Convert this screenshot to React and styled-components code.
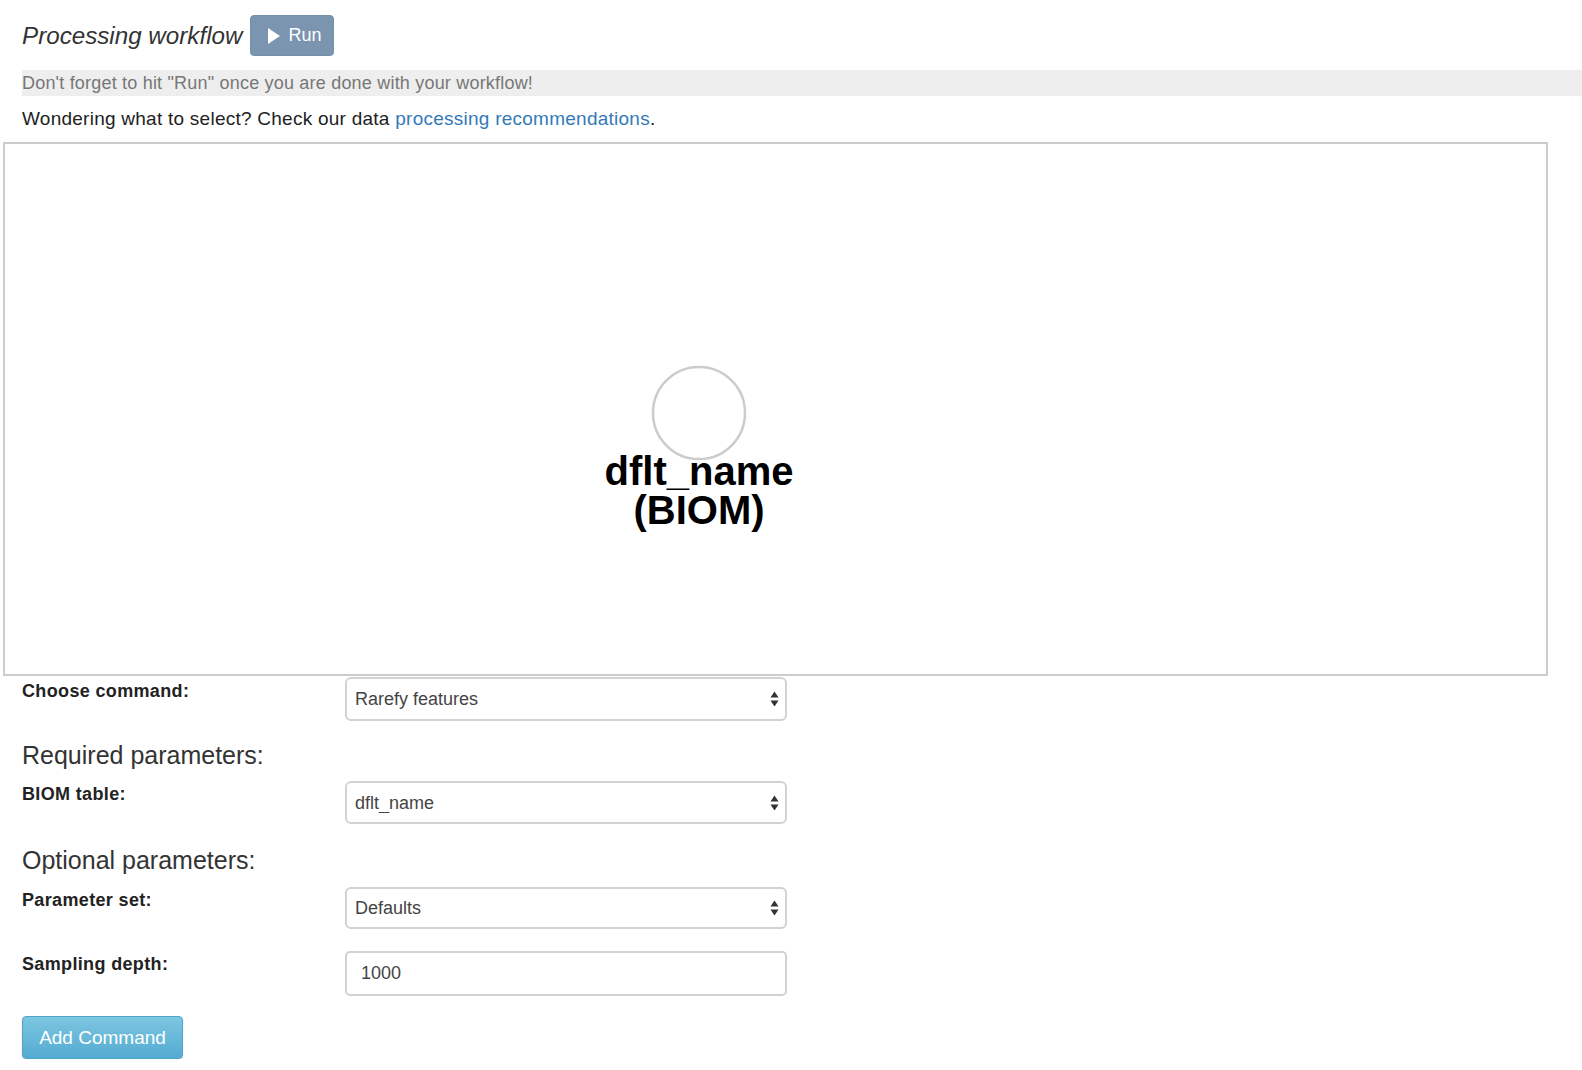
import React from "react";
import styled, { createGlobalStyle } from "styled-components";

const Global = createGlobalStyle`
  html, body { margin: 0; padding: 0; background: #fff; }
  body {
    font-family: "Liberation Sans", Arial, Helvetica, sans-serif;
    color: #333;
  }
  * { box-sizing: border-box; }
`;

const Page = styled.div`
  width: 1582px;
  padding-top: 15px;
`;

const Header = styled.div`
  display: flex;
  align-items: center;
  gap: 8px;
  padding-left: 22px;
  height: 41px;
`;

const Title = styled.h3`
  margin: 0;
  font-size: 24.2px;
  font-weight: 400;
  font-style: italic;
  color: #333;
`;

const RunButton = styled.button`
  display: flex;
  align-items: center;
  gap: 8px;
  height: 41px;
  width: 84px;
  padding: 0 0 0 17px;
  border: 1px solid #7490ab;
  border-radius: 4px;
  background: #7b94af;
  color: #fff;
  font-family: inherit;
  font-size: 18px;
  cursor: default;
`;

const Notice = styled.div`
  margin: 14px 0 0 22px;
  height: 26px;
  line-height: 26px;
  background: #eeeeee;
  color: #777;
  font-size: 18px;
  letter-spacing: 0.2px;
`;

const Hint = styled.p`
  margin: 10px 0 0 22px;
  font-size: 19px;
  letter-spacing: 0.25px;
  line-height: 26px;
  color: #222;
`;

const Link = styled.a`
  color: #337ab7;
  text-decoration: none;
`;

const Canvas = styled.div`
  position: relative;
  margin: 10px 0 0 3px;
  width: 1545px;
  height: 534px;
  border: 2px solid #cccccc;
  background: #fff;
`;

const Graph = styled.svg`
  display: block;
  width: 100%;
  height: 100%;
`;

const Form = styled.div`
  padding-left: 22px;
  display: flex;
  flex-direction: column;
`;

const Row = styled.div`
  display: grid;
  grid-template-columns: 323px 442px;
  align-items: start;
  margin-top: ${(p) => p.$mt || 0}px;
`;

const Label = styled.label`
  font-weight: 700;
  font-size: 18px;
  letter-spacing: 0.35px;
  line-height: 20px;
  color: #222;
  padding-top: ${(p) => p.$pt || 4}px;
`;

const SectionTitle = styled.h4`
  margin: ${(p) => p.$mt}px 0 0 0;
  font-size: 25px;
  font-weight: 400;
  color: #333;
  line-height: 30px;
`;

const SelectWrap = styled.div`
  position: relative;
  width: 442px;
`;

const Select = styled.select`
  appearance: none;
  -webkit-appearance: none;
  width: 100%;
  height: ${(p) => p.$h || 44}px;
  padding: 0 30px 0 8px;
  border: 2px solid #d2d2d2;
  border-radius: 6px;
  background: #fff;
  font-family: inherit;
  font-size: 18px;
  color: #444;
  outline: none;
`;

const Arrows = styled.svg`
  position: absolute;
  right: 8px;
  top: 50%;
  transform: translateY(-50%);
  pointer-events: none;
`;

const Input = styled.input`
  width: 442px;
  height: 45px;
  padding: 0 14px;
  border: 2px solid #d2d2d2;
  border-radius: 5px;
  font-family: inherit;
  font-size: 18px;
  color: #444;
  outline: none;
`;

const AddButton = styled.button`
  margin-top: 20px;
  width: 161px;
  height: 43px;
  border: 1px solid #4ea4c9;
  border-radius: 4px;
  background: linear-gradient(#7cc6e1, #54abd1);
  color: #fff;
  font-family: inherit;
  font-size: 19px;
  box-shadow: 0 1px 2px rgba(0, 0, 0, 0.12);
  cursor: default;
`;

function SelectBox({ value, h }) {
  return (
    <SelectWrap>
      <Select $h={h} defaultValue={value}>
        <option>{value}</option>
      </Select>
      <Arrows width="9" height="15" viewBox="0 0 9 15">
        <path d="M4.5 0 L8.5 6 L0.5 6 Z" fill="#333" />
        <path d="M0.5 9 L8.5 9 L4.5 15 Z" fill="#333" />
      </Arrows>
    </SelectWrap>
  );
}

export default function App() {
  return (
    <>
      <Global />
      <Page>
        <Header>
          <Title>Processing workflow</Title>
          <RunButton>
            <svg width="12" height="16" viewBox="0 0 12 16">
              <path d="M0 0 L12 8 L0 16 Z" fill="#fff" />
            </svg>
            Run
          </RunButton>
        </Header>
        <Notice>Don't forget to hit "Run" once you are done with your workflow!</Notice>
        <Hint>
          Wondering what to select? Check our data{" "}
          <Link href="#">processing recommendations</Link>.
        </Hint>
        <Canvas>
          <Graph>
            <circle cx="694" cy="269" r="46" fill="#fff" stroke="#cccccc" strokeWidth="2.5" />
            <text
              x="694"
              y="341"
              textAnchor="middle"
              fontFamily="Liberation Sans, Arial, sans-serif"
              fontWeight="700"
              fontSize="40"
              fill="#000"
            >
              dflt_name
            </text>
            <text
              x="694"
              y="380"
              textAnchor="middle"
              fontFamily="Liberation Sans, Arial, sans-serif"
              fontWeight="700"
              fontSize="40"
              fill="#000"
            >
              (BIOM)
            </text>
          </Graph>
        </Canvas>
        <Form>
          <Row $mt={1}>
            <Label $pt={4}>Choose command:</Label>
            <SelectBox value="Rarefy features" />
          </Row>
          <SectionTitle $mt={19}>Required parameters:</SectionTitle>
          <Row $mt={11}>
            <Label $pt={3}>BIOM table:</Label>
            <SelectBox value="dflt_name" h={43} />
          </Row>
          <SectionTitle $mt={21}>Optional parameters:</SectionTitle>
          <Row $mt={12}>
            <Label $pt={3}>Parameter set:</Label>
            <SelectBox value="Defaults" h={42} />
          </Row>
          <Row $mt={22}>
            <Label $pt={3}>Sampling depth:</Label>
            <Input defaultValue="1000" />
          </Row>
          <div>
            <AddButton>Add Command</AddButton>
          </div>
        </Form>
      </Page>
    </>
  );
}
